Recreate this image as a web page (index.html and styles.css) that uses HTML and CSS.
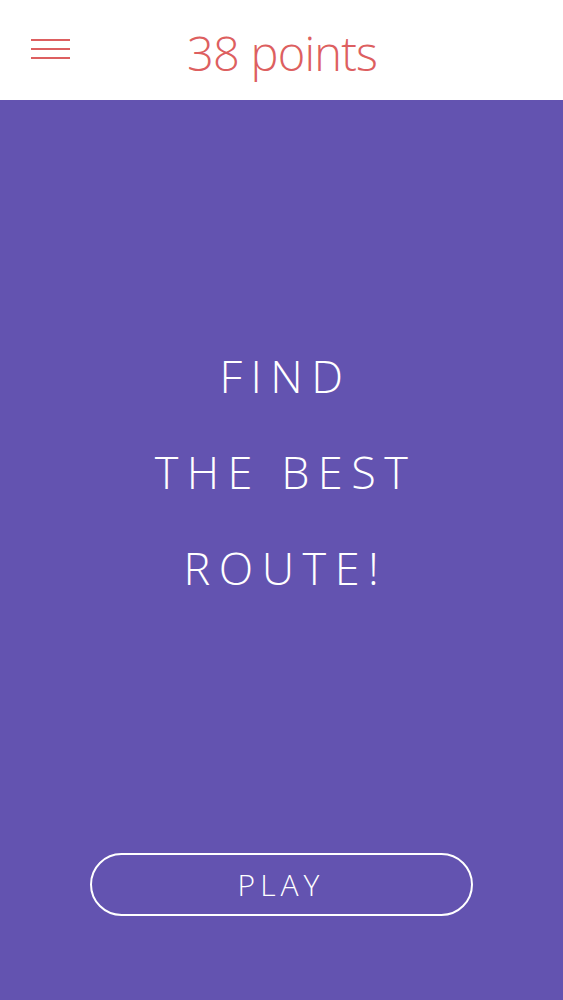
FILE: index.html
```html
<!DOCTYPE html>
<html>
<head>
<meta charset="utf-8">
<link rel="stylesheet" href="styles.css">
</head>
<body>
<header class="topbar">
  <button class="menu" aria-label="Menu">
    <svg width="40" height="26" viewBox="0 0 40 26"><g stroke="#dd5f60" stroke-width="2"><line x1="0" y1="2" x2="39" y2="2"/><line x1="0" y1="11" x2="39" y2="11"/><line x1="0" y1="20" x2="39" y2="20"/></g></svg>
  </button>
  <h1 class="score">38 points</h1>
</header>
<main class="stage">
  <div class="headline">
    <p>FIND</p>
    <p>THE BEST</p>
    <p>ROUTE!</p>
  </div>
  <button class="play">PLAY</button>
</main>
</body>
</html>
```
FILE: styles.css
```css
html, body {
  margin: 0;
  padding: 0;
  height: 100%;
}
body {
  font-family: "Open Sans", "Liberation Sans", sans-serif;
  font-weight: 300;
  background: #6353b0;
  display: flex;
  flex-direction: column;
}
.topbar {
  height: 100px;
  background: #fff;
  display: flex;
  align-items: center;
  position: relative;
}
.menu {
  background: none;
  border: 0;
  padding: 0;
  margin: 1px 0 0 31px;
  width: 40px;
  height: 26px;
  display: flex;
}
.score {
  margin: 5px 0 0 116px;
  font-size: 47px;
  font-weight: 300;
  color: #dd5f60;
  letter-spacing: -0.8px;
}
.stage {
  flex: 1;
  display: flex;
  flex-direction: column;
  align-items: center;
}
.headline {
  margin-top: 228px;
  text-align: center;
  color: #fff;
  font-size: 45px;
  letter-spacing: 8.5px;
}
.headline p {
  margin: 0;
  line-height: 96px;
  padding-left: 8px;
}
.play {
  margin-top: 237px;
  width: 383px;
  height: 63px;
  border: 2px solid #fff;
  border-radius: 32px;
  background: transparent;
  color: #fff;
  font-family: "Open Sans", "Liberation Sans", sans-serif;
  font-weight: 300;
  font-size: 30px;
  letter-spacing: 5px;
  padding-left: 5px;
}
```
